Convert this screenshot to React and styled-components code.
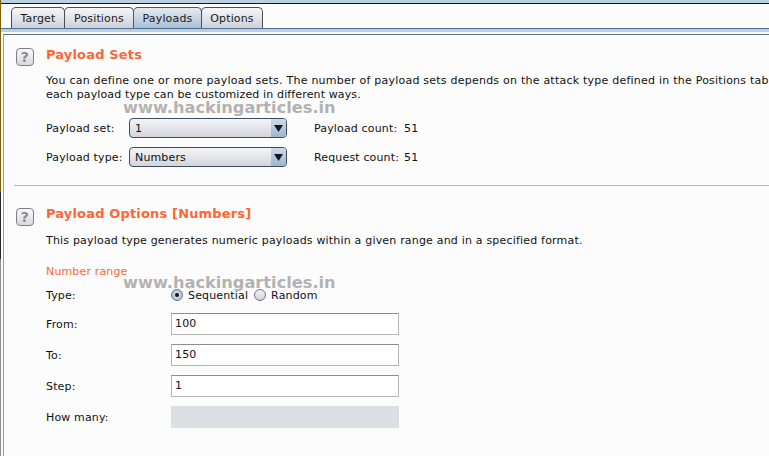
import { Fragment } from "react";
import styled, { createGlobalStyle } from "styled-components";

const Global = createGlobalStyle`
    html, body {
        margin: 0;
        padding: 0;
        background: #fcfcfc;
    }
`

const Page = styled.div`
    position: relative;
    width: 769px;
    height: 456px;
    overflow: hidden;
    display: flex;
    font-family: "DejaVu Sans", sans-serif;
    font-size: 11px;
    letter-spacing: 0.15px;
    color: #111;
    background: #fcfcfc;
`

const LeftEdge = styled.div`
    width: 1px;
    flex: none;
    background: linear-gradient(#7d6208 0, #7d6208 192px, #23262b 192px, #23262b 259px, #8d8d90 259px);
`

const Main = styled.div`
    flex: 1;
    min-width: 0;
    display: flex;
    flex-direction: column;
`

const TopBand = styled.div`
    height: 4px;
    box-sizing: border-box;
    background: #b9cfe4;
    border-bottom: 1px solid #14171c;
`

const TabBar = styled.div`
    height: 24px;
    padding-left: 10px;
    box-sizing: border-box;
    display: flex;
    align-items: flex-end;
    background: #fcfcfc;
`

const Tab = styled.div`
    width: ${props => props.w}px;
    height: 21px;
    box-sizing: border-box;
    display: flex;
    align-items: center;
    justify-content: center;
    color: #1a1a1a;
    border: 1px solid ${props => props.selected ? "#3d5a78" : "#4a4f57"};
    border-bottom: 0;
    border-radius: 5px 5px 0 0;
    margin-right: -1px;
    background: ${props => props.selected
        ? "linear-gradient(#e4ebf2, #a8c0d8)"
        : "linear-gradient(#f6f7f8, #cdd1d8)"};
`

const TabRule = styled.div`
    height: 6px;
    flex: none;
    box-sizing: border-box;
    background: linear-gradient(#b9cfe4 0, #b9cfe4 3px, #fcfcfc 3px);
    border-top: 1px solid #4f6d8c;
`

const Content = styled.div`
    flex: 1;
    min-height: 0;
    margin-left: 2px;
    display: flex;
    flex-direction: column;
    border-left: 1px solid #9a9a9d;
    border-top: 1px solid #666f80;
    background: #fcfcfc;
`

const Section = styled.section`
    display: flex;
    gap: 12px;
    padding-left: 12px;
`

const HelpButton = styled.div`
    width: 18px;
    height: 18px;
    flex: none;
    margin-top: ${props => props.top}px;
    box-sizing: border-box;
    border: 1px solid #7d8087;
    border-radius: 4px;
    display: flex;
    align-items: center;
    justify-content: center;
    font-weight: 700;
    font-size: 14px;
    color: #8a8a8a;
    background: linear-gradient(#f8f8f8, #d8dadd);
`

const SectionBody = styled.div`
    flex: 1;
    min-width: 0;
`

const Title = styled.h2`
    margin: ${props => props.top}px 0 0;
    height: 16px;
    line-height: 16px;
    font-size: 13px;
    font-weight: 700;
    letter-spacing: 0.16px;
    color: #ff6633;
    white-space: nowrap;
`

const Text = styled.p`
    margin: ${props => props.top}px 0 0;
    line-height: 14px;
    letter-spacing: ${props => props.spacing}px;
    white-space: nowrap;
`

const ComboRows = styled.div`
    margin-top: 16px;
    display: flex;
    flex-direction: column;
    gap: 9px;
`

const ComboRow = styled.div`
    display: flex;
    align-items: center;
    height: 20px;
`

const ComboLabel = styled.span`
    width: 83px;
`

const Combo = styled.div`
    width: 158px;
    height: 20px;
    box-sizing: border-box;
    border: 1px solid #3e4d5e;
    border-radius: 4px;
    display: flex;
    overflow: hidden;
    background: linear-gradient(#f4f5f7, #d3d6dd);
`

const ComboValue = styled.span`
    flex: 1;
    padding-left: 5px;
    line-height: 19px;
`

const ComboArrow = styled.span`
    width: 15px;
    display: flex;
    align-items: center;
    justify-content: center;
    background: linear-gradient(#cfdbe7, #9cb6cf);
`

const CountLabel = styled.span`
    width: 90px;
    margin-left: 27px;
`

const Divider = styled.hr`
    margin: 18px 0 0 10px;
    height: 1px;
    border: 0;
    background: #b5b5b8;
`

const SubTitle = styled.div`
    margin-top: 17px;
    line-height: 14px;
    color: #ff6633;
`

const FormGrid = styled.div`
    margin-top: 7px;
    display: grid;
    grid-template-columns: 125px 228px;
    grid-template-rows: 18px repeat(4, 22px);
    row-gap: 9px;
    align-items: center;
`

const RadioRow = styled.div`
    display: flex;
    align-items: center;
    height: 14px;
`

const Radio = styled.span`
    width: 12px;
    height: 12px;
    box-sizing: border-box;
    border-radius: 50%;
    border: 1px solid #6d7580;
    margin-right: 5px;
    display: flex;
    align-items: center;
    justify-content: center;
    background: ${props => props.on
        ? "radial-gradient(#d5e0ea, #a5bdd3)"
        : "linear-gradient(#f3f4f6, #cfd3d9)"};

    &::after {
        content: "";
        width: 4px;
        height: 4px;
        border-radius: 50%;
        background: ${props => props.on ? "#15181c" : "transparent"};
    }
`

const RadioText = styled.span`
    margin-right: 6px;
`

const Field = styled.div`
    height: 22px;
    box-sizing: border-box;
    padding-left: 3px;
    line-height: 19px;
    border: 1px solid #b3b5b8;
    border-top: 1px solid #8b8d90;
    background: ${props => props.disabled ? "#dcdfe3" : "#fff"};
    ${props => props.disabled && "border-color: #dcdfe3;"}
`

const Watermark = styled.div`
    position: absolute;
    left: 123px;
    top: ${props => props.y}px;
    font-size: 16.2px;
    font-weight: 700;
    letter-spacing: 0;
    line-height: 20px;
    white-space: nowrap;
    color: #b2b2b2;
    text-shadow: 0 0 2px #fff;
`

const numberRows = [
    ["From:", "100"],
    ["To:", "150"],
    ["Step:", "1"],
];

function Arrow() {
    return (
        <svg width="9" height="7" viewBox="0 0 9 7">
            <path d="M0 0H9L4.5 7Z" fill="#15181c" />
        </svg>
    );
}

function PayloadCombo(props) {
    return (
        <ComboRow>
            <ComboLabel>{props.label}</ComboLabel>
            <Combo>
                <ComboValue>{props.value}</ComboValue>
                <ComboArrow><Arrow /></ComboArrow>
            </Combo>
            <CountLabel>{props.countLabel}</CountLabel>
            <span>{props.count}</span>
        </ComboRow>
    );
}

export default function App() {
    return (
        <Page>
            <Global />
            <LeftEdge />
            <Main>
                <TopBand />
                <TabBar>
                    <Tab w={54}>Target</Tab>
                    <Tab w={70}>Positions</Tab>
                    <Tab w={69} selected>Payloads</Tab>
                    <Tab w={62}>Options</Tab>
                </TabBar>
                <TabRule />
                <Content>
                    <Section>
                        <HelpButton top={13}>?</HelpButton>
                        <SectionBody>
                            <Title top={12}>Payload Sets</Title>
                            <Text top={11} spacing={0.23}>You can define one or more payload sets. The number of payload sets depends on the attack type defined in the Positions tab</Text>
                            <Text top={0} spacing={0.13}>each payload type can be customized in different ways.</Text>
                            <ComboRows>
                                <PayloadCombo label="Payload set:" value="1" countLabel="Payload count:" count="51" />
                                <PayloadCombo label="Payload type:" value="Numbers" countLabel="Request count:" count="51" />
                            </ComboRows>
                        </SectionBody>
                    </Section>
                    <Divider />
                    <Section>
                        <HelpButton top={22}>?</HelpButton>
                        <SectionBody>
                            <Title top={20}>Payload Options [Numbers]</Title>
                            <Text top={12} spacing={0.19}>This payload type generates numeric payloads within a given range and in a specified format.</Text>
                            <SubTitle>Number range</SubTitle>
                            <FormGrid>
                                <span>Type:</span>
                                <RadioRow>
                                    <Radio on />
                                    <RadioText>Sequential</RadioText>
                                    <Radio />
                                    <span>Random</span>
                                </RadioRow>
                                {numberRows.map(row => (
                                    <Fragment key={row[0]}>
                                        <span>{row[0]}</span>
                                        <Field>{row[1]}</Field>
                                    </Fragment>
                                ))}
                                <span>How many:</span>
                                <Field disabled />
                            </FormGrid>
                        </SectionBody>
                    </Section>
                </Content>
            </Main>
            <Watermark y={98}>www.hackingarticles.in</Watermark>
            <Watermark y={273}>www.hackingarticles.in</Watermark>
        </Page>
    );
}
